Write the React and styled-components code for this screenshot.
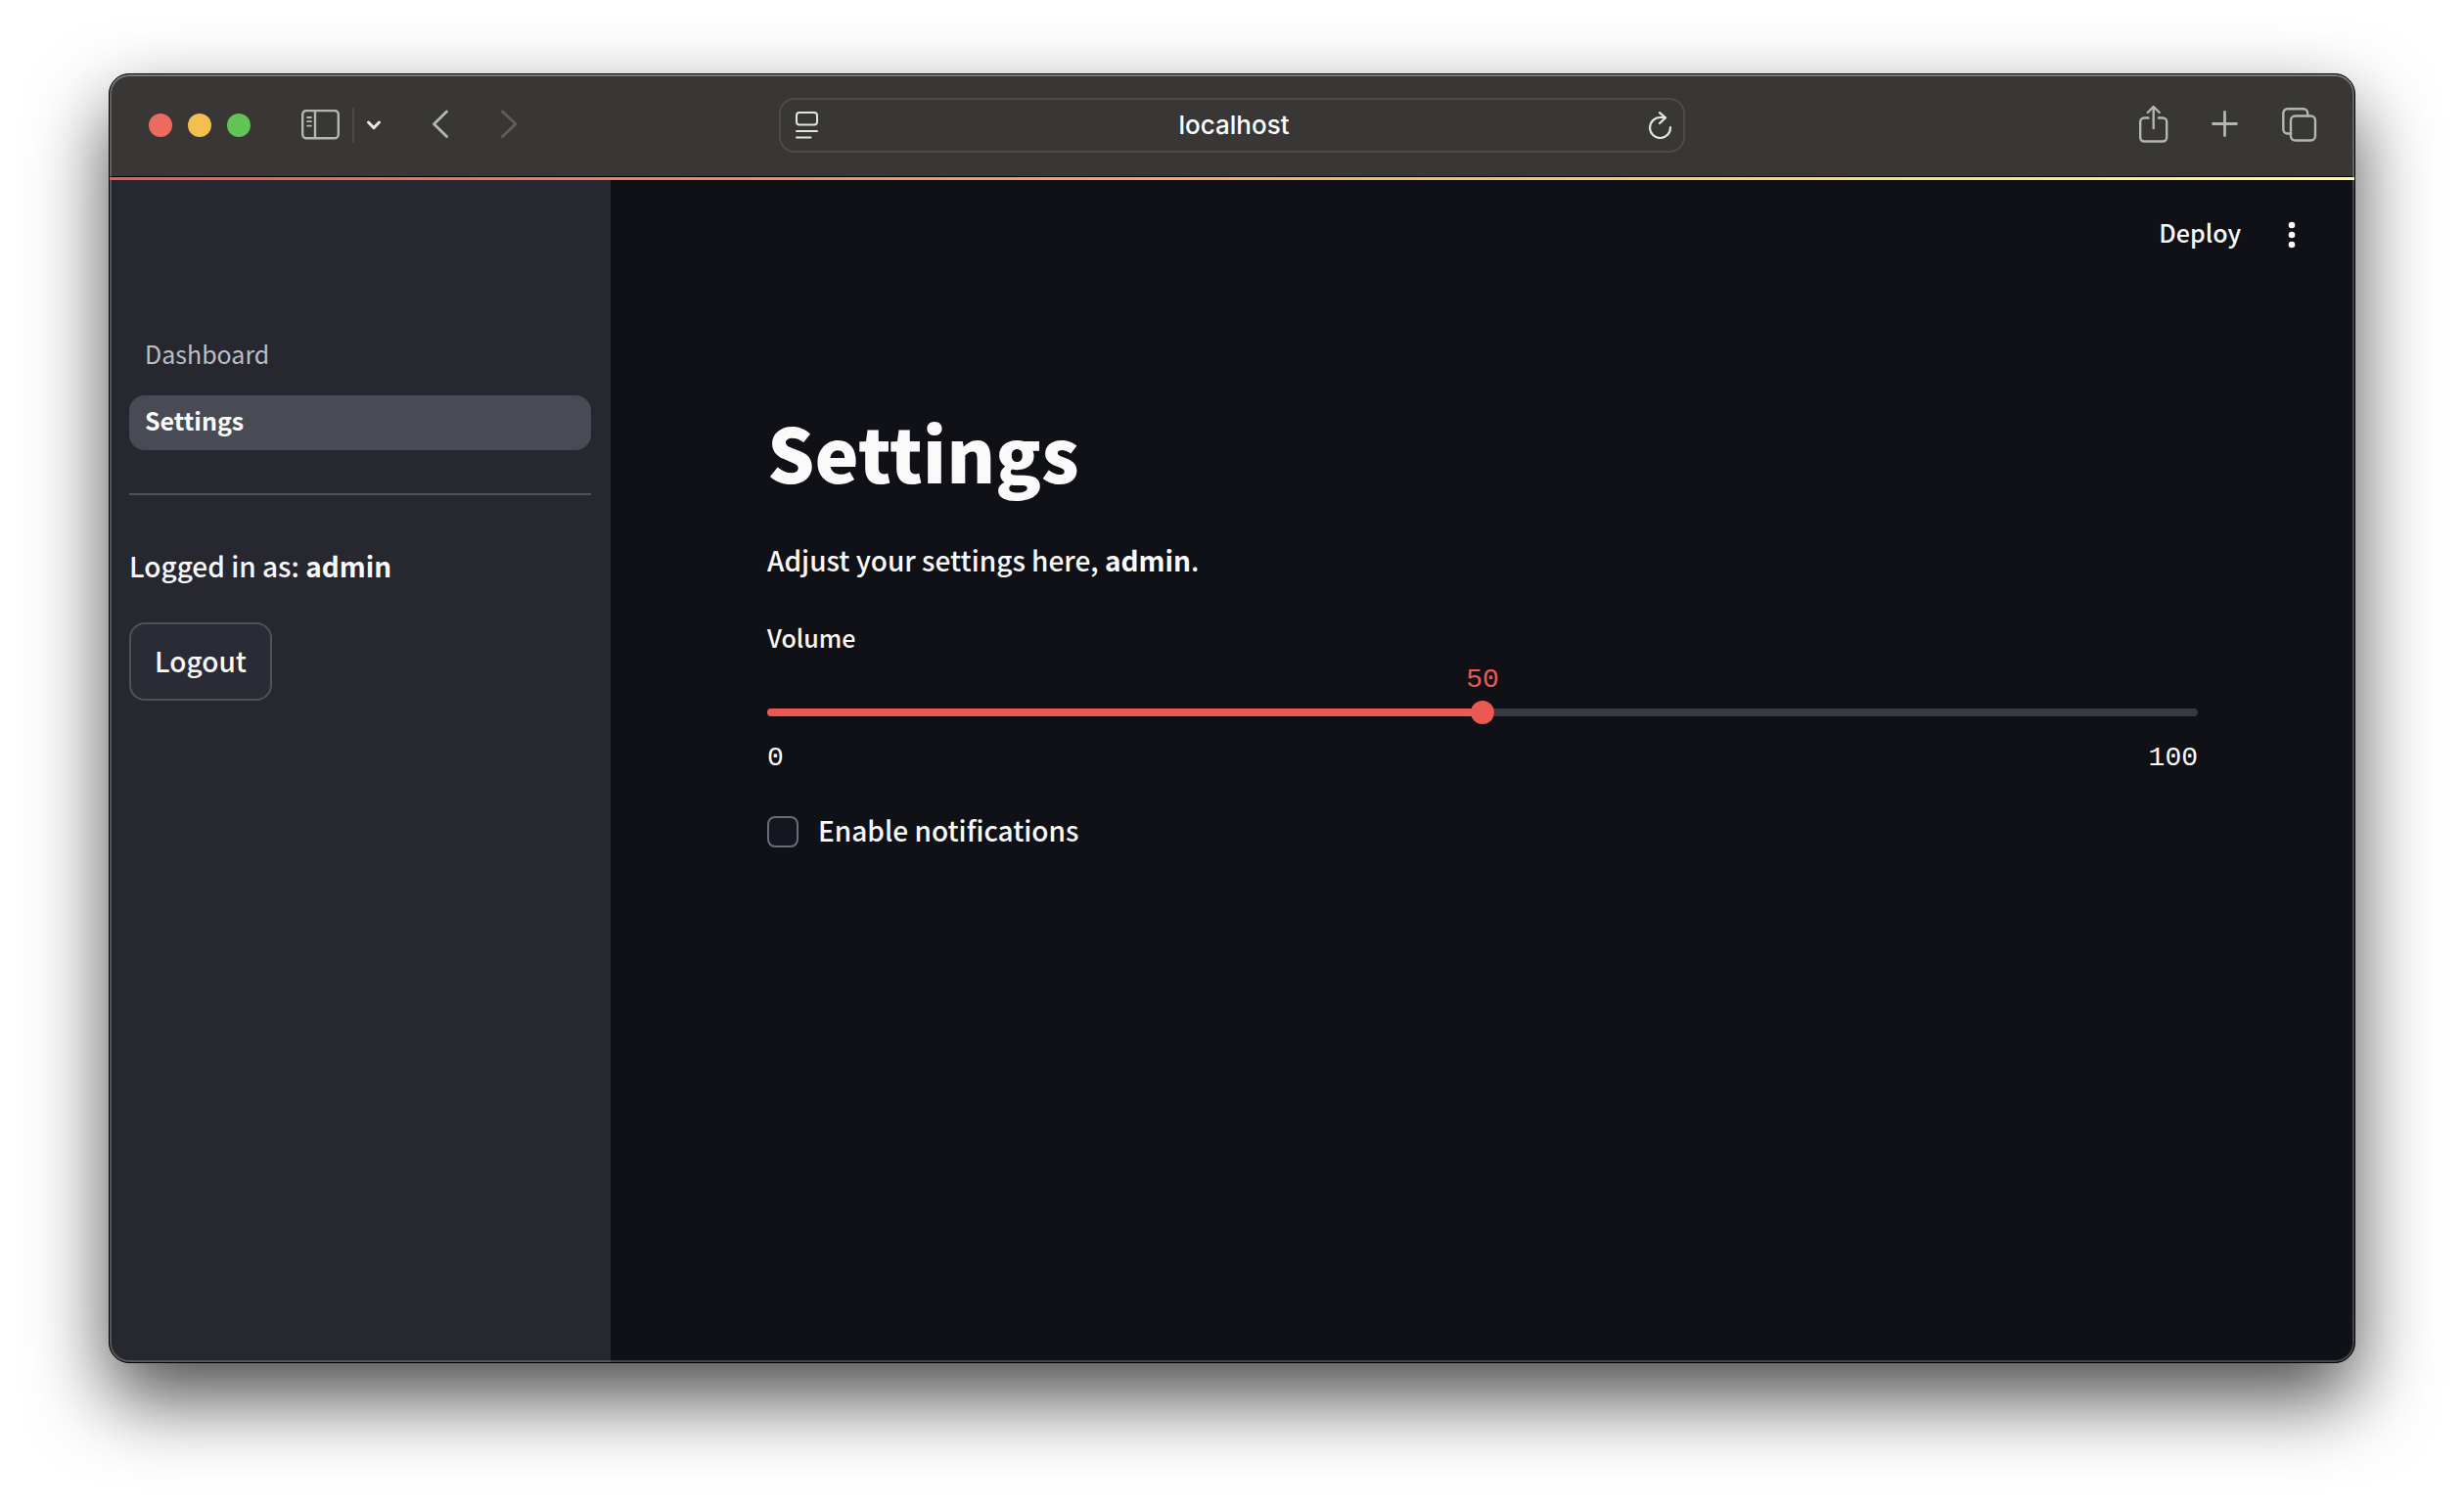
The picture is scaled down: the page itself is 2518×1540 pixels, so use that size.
import React, { useState } from "react";
import styled, { createGlobalStyle } from "styled-components";

const sans = `"Noto Sans CJK SC", "Noto Sans", sans-serif`;
const mono = `"Liberation Mono", monospace`;

const GlobalStyle = createGlobalStyle`
  *, *::before, *::after { box-sizing: border-box; }
  body { margin: 0; background: #fff; }
  button, input { font: inherit; color: inherit; margin: 0; }
`;

const Desktop = styled.div`
  display: flex;
  min-height: 100vh;
  padding: 75px 111px 147px;
  overflow: hidden;
  font-family: ${sans};
  font-weight: 500;
  color: #fafafa;
`;

const Window = styled.div`
  position: relative;
  display: flex;
  flex: 1;
  flex-direction: column;
  min-width: 0;
  overflow: hidden;
  border: 1px solid #000;
  border-radius: 21px;
  background: #0f1116;
  box-shadow: 0 36px 80px rgba(0, 0, 0, 0.7);

  &::after {
    content: "";
    position: absolute;
    inset: 0;
    border-radius: 20px;
    box-shadow:
      inset 0 0 0 2px rgba(255, 255, 255, 0.22),
      inset 0 2px 0 rgba(255, 255, 255, 0.16);
    pointer-events: none;
  }
`;

const TitleBar = styled.header`
  display: grid;
  grid-template-columns: 1fr minmax(320px, 926px) 1fr;
  align-items: center;
  height: 105px;
  padding: 0 38px;
  border-bottom: 1px solid #000;
  background: #383735;
`;

const Controls = styled.div`
  display: flex;
  align-items: center;
  gap: 52px;
  padding-left: 2px;
`;

const BarGroup = styled.div`
  display: flex;
  align-items: center;
  justify-content: ${(p) => (p.$end ? "flex-end" : "flex-start")};
  gap: ${(p) => p.$gap}px;
`;

const Light = styled.button`
  width: 24px;
  height: 24px;
  padding: 0;
  border: 0;
  border-radius: 50%;
  background: ${(p) => p.$color};
`;

const IconButton = styled.button`
  display: flex;
  padding: 0;
  border: 0;
  background: none;
  color: ${(p) => p.$color || "#b5b5b3"};

  svg {
    display: block;
    fill: none;
    stroke: currentColor;
    stroke-linecap: round;
    stroke-linejoin: round;
  }
`;

const Separator = styled.span`
  width: 2px;
  height: 36px;
  background: #4a4947;
`;

const AddressBar = styled.div`
  display: flex;
  align-items: center;
  height: 56px;
  padding: 0 11px 0 15px;
  border: 2px solid #4d4c4a;
  border-radius: 16px;
`;

const Address = styled.input`
  flex: 1;
  min-width: 0;
  padding: 0;
  border: 0;
  outline: 0;
  background: none;
  color: #fff;
  font-family: Inter, sans-serif;
  font-size: 26px;
  line-height: 32px;
  text-align: center;
`;

const Decoration = styled.div`
  position: relative;
  z-index: 1;
  height: 3px;
  background: linear-gradient(90deg, #ec5953, #fffd8b);
`;

const Page = styled.div`
  display: flex;
  flex: 1;
`;

const Sidebar = styled.aside`
  flex: 0 0 512px;
  padding: 152px 20px 20px;
  background: #272730;
`;

const Nav = styled.nav`
  display: flex;
  flex-direction: column;
  gap: 12px;
`;

const NavLink = styled.a`
  height: 56px;
  padding: 0 16px;
  border-radius: 16px;
  background: ${(p) => (p.$active ? "#494b54" : "transparent")};
  color: ${(p) => (p.$active ? "#fafafa" : "#bebec1")};
  font-size: 25px;
  font-weight: ${(p) => (p.$active ? 700 : 400)};
  line-height: 50px;
  text-decoration: none;
`;

const Divider = styled.hr`
  height: 2px;
  margin: 44px 0 48px;
  border: 0;
  background: #51515a;
`;

const Text = styled.p`
  margin: 0;
  font-size: 28px;
  line-height: 48px;
`;

const LogoutButton = styled.button`
  height: 80px;
  margin-top: 34px;
  padding: 0 24px 2px;
  border: 2px solid #51515a;
  border-radius: 16px;
  background: #2b2b35;
  font-size: 28px;
`;

const Main = styled.main`
  flex: 1;
  min-width: 0;
`;

const AppHeader = styled.div`
  display: flex;
  align-items: center;
  justify-content: flex-end;
  gap: 32px;
  height: 112px;
  padding-right: 44px;
`;

const DeployButton = styled.button`
  padding: 0 0 6px;
  border: 0;
  background: none;
  font-size: 25px;
  line-height: 48px;
`;

const Content = styled.div`
  display: flex;
  flex-direction: column;
  padding: 110px 160px 64px;
`;

const Title = styled.h1`
  margin: 0 0 32px;
  font-size: 76px;
  font-weight: 900;
  line-height: 110px;
`;

const SliderField = styled.div`
  display: flex;
  flex-direction: column;
  margin: 35px 0 43px;
`;

const SliderLabel = styled.label`
  font-size: 25px;
  line-height: 40px;
`;

const ValueRow = styled.div`
  position: relative;
  height: 32px;
  margin: 8px 12px 5px;
`;

const SliderValue = styled.output`
  position: absolute;
  transform: translateX(-50%);
  color: #ec5953;
  font-family: ${mono};
  font-size: 28px;
  line-height: 32px;
`;

const Slider = styled.input`
  appearance: none;
  display: block;
  width: 100%;
  height: 24px;
  background: none;

  &::-webkit-slider-runnable-track {
    height: 8px;
    border-radius: 4px;
    background: linear-gradient(
      90deg,
      #ec5953 var(--fill),
      #383a41 var(--fill)
    );
  }

  &::-webkit-slider-thumb {
    appearance: none;
    width: 24px;
    height: 24px;
    margin-top: -8px;
    border-radius: 50%;
    background: #ec5953;
  }
`;

const Range = styled.div`
  display: flex;
  justify-content: space-between;
  margin-top: 19px;
  font-family: ${mono};
  font-size: 28px;
  line-height: 32px;
`;

const CheckRow = styled.label`
  display: flex;
  gap: 20px;
  font-size: 28px;
  line-height: 28px;
`;

const Checkbox = styled.input`
  appearance: none;
  width: 32px;
  height: 32px;
  border: 2px solid #6c6d74;
  border-radius: 8px;
  background: #131720;

  &:checked {
    border-color: #ec5953;
    background: #ec5953;
  }
`;

const SidebarIcon = () => (
  <svg width="40" height="32" viewBox="0 0 40 32" strokeWidth="2.4">
    <rect x="1.2" y="1" width="36.6" height="28.2" rx="4" />
    <path d="M14 1v28" />
    <path d="M6 8h4M6 12.2h4M6 16.6h4" strokeWidth="1.8" />
  </svg>
);

const SmallChevron = () => (
  <svg width="16" height="12" viewBox="0 0 16 12" strokeWidth="3">
    <path d="M2.5 3 8 8.6 13.5 3" />
  </svg>
);

const Chevron = ({ forward }) => (
  <svg width="18" height="32" viewBox="0 0 18 32" strokeWidth="2.8">
    <path d={forward ? "M1.5 2 15 14.8 1.500 27.6" : "M14.500 2 1.500 14.8l13 12.8"} />
  </svg>
);

const ReaderIcon = () => (
  <svg width="24" height="28" viewBox="0 0 24 28" strokeWidth="2">
    <rect x="1" y="1" width="21" height="12.6" rx="3" />
    <path d="M1 20h21M1 26.4h14.5" />
  </svg>
);

const ReloadIcon = () => (
  <svg width="24" height="28" viewBox="0 0 24 28" strokeWidth="2.2">
    <path d="M22 16.2A10.5 10.5 0 1 1 11.5 6H16.5" />
    <path d="M11 1.2 17 6.4 11 12" />
  </svg>
);

const ShareIcon = () => (
  <svg width="30" height="42" viewBox="0 0 30 42" strokeWidth="2.4">
    <path d="M9.5 13.500H5.2a4 4 0 0 0-4 4v16a4 4 0 0 0 4 4h19a4 4 0 0 0 4-4v-16a4 4 0 0 0-4-4h-4.300" />
    <path d="M14.700 24V2.500M8.700 8l6-6 6 6" />
  </svg>
);

const PlusIcon = () => (
  <svg width="28" height="30" viewBox="0 0 28 30" strokeWidth="2.8">
    <path d="M1.500 13.500h24M13.500 1.500v24" />
  </svg>
);

const TabsIcon = () => (
  <svg width="36" height="36" viewBox="0 0 36 36" strokeWidth="2.4">
    <rect x="9" y="8.500" width="25" height="25" rx="4.500" />
    <path d="M9 26.500H5.500a4.200 4.200 0 0 1-4.200-4.200V5.500a4.200 4.200 0 0 1 4.200-4.200H22a4.200 4.200 0 0 1 4.200 4.200v3" />
  </svg>
);

const MenuDots = () => (
  <svg width="40" height="40" viewBox="0 0 24 24">
    <g fill="currentColor" stroke="none">
      <circle cx="12" cy="6" r="2" />
      <circle cx="12" cy="12" r="2" />
      <circle cx="12" cy="18" r="2" />
    </g>
  </svg>
);

export default function App() {
  const [volume, setVolume] = useState(50);
  const [notify, setNotify] = useState(false);

  return (
    <>
      <GlobalStyle />
      <Desktop>
        <Window>
          <TitleBar>
            <Controls>
              <BarGroup $gap={16}>
                <Light $color="#ec6a5e" aria-label="Close" />
                <Light $color="#f4bf4f" aria-label="Minimize" />
                <Light $color="#61c554" aria-label="Zoom" />
              </BarGroup>
              <BarGroup $gap={12}>
                <IconButton aria-label="Show sidebar">
                  <SidebarIcon />
                </IconButton>
                <Separator />
                <IconButton $color="#e6e6e4" aria-label="Tab groups">
                  <SmallChevron />
                </IconButton>
              </BarGroup>
              <IconButton aria-label="Back">
                <Chevron />
              </IconButton>
              <IconButton $color="#5f5e5c" aria-label="Forward" disabled>
                <Chevron forward />
              </IconButton>
            </Controls>
            <AddressBar>
              <IconButton $color="#e3e3e1" aria-label="Page menu">
                <ReaderIcon />
              </IconButton>
              <Address aria-label="Address" defaultValue="localhost" />
              <IconButton $color="#e3e3e1" aria-label="Reload">
                <ReloadIcon />
              </IconButton>
            </AddressBar>
            <BarGroup $gap={44} $end>
              <IconButton aria-label="Share">
                <ShareIcon />
              </IconButton>
              <IconButton aria-label="New tab">
                <PlusIcon />
              </IconButton>
              <IconButton aria-label="Tab overview">
                <TabsIcon />
              </IconButton>
            </BarGroup>
          </TitleBar>
          <Decoration />
          <Page>
            <Sidebar>
              <Nav>
                <NavLink href="#dashboard">Dashboard</NavLink>
                <NavLink href="#settings" $active aria-current="page">
                  Settings
                </NavLink>
              </Nav>
              <Divider />
              <Text>
                Logged in as: <strong>admin</strong>
              </Text>
              <LogoutButton>Logout</LogoutButton>
            </Sidebar>
            <Main>
              <AppHeader>
                <DeployButton>Deploy</DeployButton>
                <IconButton $color="#fafafa" aria-label="Main menu">
                  <MenuDots />
                </IconButton>
              </AppHeader>
              <Content>
                <Title>Settings</Title>
                <Text>
                  Adjust your settings here, <strong>admin</strong>.
                </Text>
                <SliderField>
                  <SliderLabel htmlFor="volume">Volume</SliderLabel>
                  <ValueRow>
                    <SliderValue htmlFor="volume" style={{ left: `${volume}%` }}>
                      {volume}
                    </SliderValue>
                  </ValueRow>
                  <Slider
                    id="volume"
                    type="range"
                    min="0"
                    max="100"
                    value={volume}
                    onChange={(e) => setVolume(Number(e.target.value))}
                    style={{ "--fill": `${volume}%` }}
                  />
                  <Range>
                    <span>0</span>
                    <span>100</span>
                  </Range>
                </SliderField>
                <CheckRow>
                  <Checkbox
                    type="checkbox"
                    checked={notify}
                    onChange={(e) => setNotify(e.target.checked)}
                  />
                  Enable notifications
                </CheckRow>
              </Content>
            </Main>
          </Page>
        </Window>
      </Desktop>
    </>
  );
}
